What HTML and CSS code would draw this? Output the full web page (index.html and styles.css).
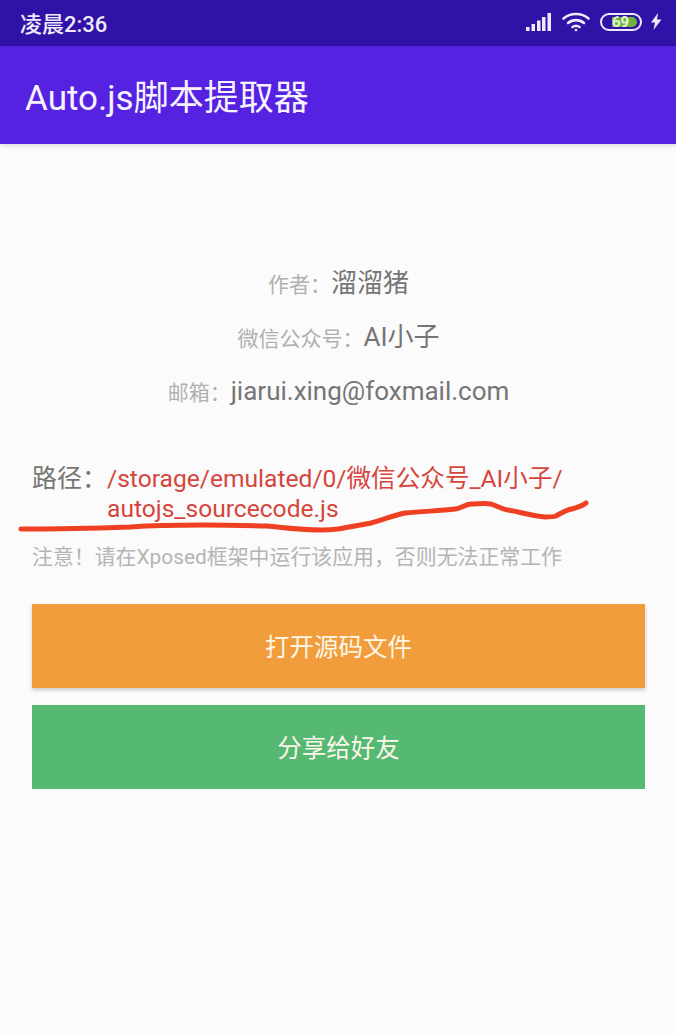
FILE: index.html
```html
<!DOCTYPE html>
<html lang="zh-CN">
<head>
    <meta charset="UTF-8">
    <title>Auto.js脚本提取器</title>
    <link rel="stylesheet" href="styles.css">
</head>
<body>
    <!-- Status bar -->
    <div class="status-bar">
        <span class="clock">凌晨2:36</span>
        <div class="status-icons">
            <svg width="25" height="18" viewBox="0 0 25 18">
                <rect x="0" y="14" width="3.500" height="4" fill="#eee9fb"/>
                <rect x="5.500" y="11" width="3.500" height="7" fill="#eee9fb"/>
                <rect x="11" y="7.500" width="3.500" height="10.500" fill="#eee9fb"/>
                <rect x="16" y="4" width="3.500" height="14" fill="#eee9fb"/>
                <rect x="21.500" y="0" width="3.500" height="18" fill="#eee9fb"/>
            </svg>
            <svg class="wifi" width="28" height="20" viewBox="0 0 28 20" fill="none" stroke="#eee9fb" stroke-width="2.600" stroke-linecap="round">
                <path d="M1.500 6.500C8.500 .5 19.500 .5 26.500 6.500"/>
                <path d="M6 11C10.500 7.200 17.500 7.200 22 11"/>
                <path d="M10.500 15C12.700 13.400 15.300 13.400 17.500 15"/>
                <circle cx="14" cy="18" r="1.300" fill="#eee9fb" stroke="none"/>
            </svg>
            <div class="battery"><div class="battery-fill"></div><span>69</span></div>
            <svg class="bolt" width="12" height="17" viewBox="0 0 12 17">
                <path d="M8 0L1 9.500H5L3.500 17L11.500 6.500H7Z" fill="#eee9fb"/>
            </svg>
        </div>
    </div>

    <!-- App bar -->
    <header class="app-bar">Auto.js脚本提取器</header>

    <main class="content">
        <div class="info-row"><span class="info-label">作者：</span><span class="info-value">溜溜猪</span></div>
        <div class="info-row"><span class="info-label">微信公众号：</span><span class="info-value">AI小子</span></div>
        <div class="info-row"><span class="info-label">邮箱：</span><span class="info-value">jiarui.xing@foxmail.com</span></div>

        <div class="path-row">
            <span class="path-label">路径：</span>
            <span class="path-value">/storage/emulated/0/微信公众号_AI小子/<br>autojs_sourcecode.js</span>
        </div>
        <p class="notice">注意！请在Xposed框架中运行该应用，否则无法正常工作</p>

        <button class="btn btn-open">打开源码文件</button>
        <button class="btn btn-share">分享给好友</button>
    </main>

    <!-- Hand drawn underline on top of the screenshot -->
    <svg class="scribble" width="676" height="1034" viewBox="0 0 676 1034" fill="none">
        <path d="M21 529C60 529 100 528 130 527C175 524 230 525 267 526C290 528 315 532 338 529C350 527 360 525 371 523C385 519 395 515 405 513C425 511 440 511 455 509C462 508 466 504 471 504C478 504 485 503 491 504C497 506 502 509 508 510C520 512 533 516 545 517C550 517 553 517 556 516C560 514 564 511 568 510C575 508 581 507 586 503" stroke="#f04023" stroke-width="5" stroke-linecap="round" stroke-linejoin="round"/>
    </svg>
</body>
</html>
```

FILE: styles.css
```css
* {
    box-sizing: border-box;
}
html, body {
    margin: 0;
    height: 1034px;
    overflow: hidden;
}
body {
    position: relative;
    background: #fbfbfb;
    font-family: Roboto, "Noto Sans CJK SC", sans-serif;
}
.status-bar {
    display: flex;
    align-items: center;
    justify-content: space-between;
    height: 46px;
    padding: 0 14px 3px 20px;
    background: #3013a6;
    color: #eee9fb;
}
.clock {
    font-size: 22px;
    font-weight: 500;
}
.status-icons {
    display: flex;
    align-items: center;
    gap: 11px;
}
.battery {
    position: relative;
    width: 42px;
    height: 18px;
    margin-left: -1px;
    border: 2px solid #eee9fb;
    border-radius: 9px;
    padding: 2px;
    overflow: hidden;
}
.battery-fill {
    width: 25px;
    height: 100%;
    margin-left: 8px;
    background: #6fb23e;
    border-radius: 0 6px 6px 0;
}
.battery span {
    position: absolute;
    left: 10px;
    top: -2px;
    font-size: 15px;
    font-weight: 700;
    line-height: 18px;
    color: #e4f5d4;
}
.bolt {
    margin-left: -3px;
}
.app-bar {
    display: flex;
    align-items: center;
    height: 98px;
    padding: 0 0 2px 25px;
    background: #5622e2;
    color: #f6f2fe;
    font-size: 35px;
    box-shadow: 0 2px 4px rgba(0, 0, 0, 0.12);
}
.content {
    display: flex;
    flex-direction: column;
    padding: 112px 31px 0 32px;
}
.info-row {
    display: flex;
    justify-content: center;
    align-items: baseline;
    height: 54px;
    line-height: 54px;
}
.info-label {
    font-size: 21px;
    color: #b0b0b0;
}
.info-value {
    font-size: 26px;
    color: #757575;
}
.path-row {
    display: flex;
    margin-top: 46px;
}
.path-label {
    width: 75px;
    font-size: 25px;
    line-height: 30px;
    color: #757575;
}
.path-value {
    font-size: 24.600px;
    line-height: 30px;
    color: #d5453c;
}
.notice {
    margin: 19px 0 33px;
    font-size: 20.900px;
    line-height: 28px;
    color: #b4b4b4;
}
.btn {
    display: block;
    width: 100%;
    height: 84px;
    border: none;
    padding: 0 0 2px;
    font-family: inherit;
    font-size: 24.500px;
    color: #fdf6ea;
}
.btn-open {
    background: #f29d3b;
    box-shadow: 0 2px 4px rgba(0, 0, 0, 0.2);
}
.btn-share {
    margin-top: 17px;
    background: #55b973;
}
.scribble {
    position: absolute;
    left: 0;
    top: 0;
    pointer-events: none;
}
```
